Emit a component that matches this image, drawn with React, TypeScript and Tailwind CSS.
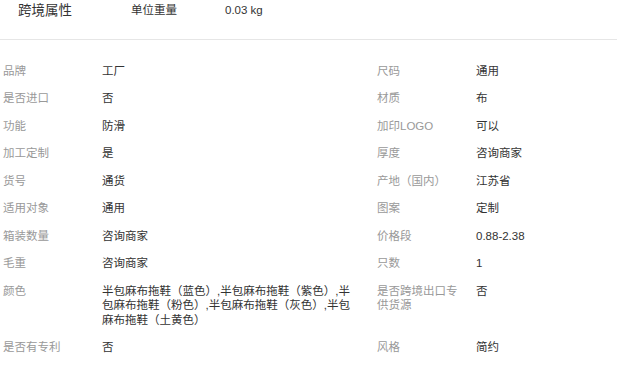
import React from "react";

const rows: [string, string, string, string][] = [
  ["品牌", "工厂", "尺码", "通用"],
  ["是否进口", "否", "材质", "布"],
  ["功能", "防滑", "加印LOGO", "可以"],
  ["加工定制", "是", "厚度", "咨询商家"],
  ["货号", "通货", "产地（国内）", "江苏省"],
  ["适用对象", "通用", "图案", "定制"],
  ["箱装数量", "咨询商家", "价格段", "0.88-2.38"],
  ["毛重", "咨询商家", "只数", "1"],
  [
    "颜色",
    "半包麻布拖鞋（蓝色）,半包麻布拖鞋（紫色）,半包麻布拖鞋（粉色）,半包麻布拖鞋（灰色）,半包麻布拖鞋（土黄色）",
    "是否跨境出口专供货源",
    "否",
  ],
  ["是否有专利", "否", "风格", "简约"],
];

export default function App() {
  return (
    <div
      className="w-[618px] h-[366px] bg-white overflow-hidden"
      style={{ fontFamily: '"Liberation Sans", "Noto Sans CJK SC", sans-serif' }}
    >
      <div className="h-[39px] flex items-start pt-[2px]">
        <div className="pl-[18px] w-[131px] text-[13.5px] leading-[17px] text-[#333]">跨境属性</div>
        <div className="w-[94px] text-[11.5px] leading-[17px] text-[#333]">单位重量</div>
        <div className="text-[11.5px] leading-[17px] text-[#333]">0.03 kg</div>
      </div>
      <div className="h-px bg-[#e6e6e6] w-[617px]" />
      <div className="pt-[17px] pl-[3px] text-[11.5px] leading-[14.5px]">
        {rows.map((r, i) => (
          <div key={i} className="flex py-[6.5px]">
            <div className="w-[99px] pr-[12px] text-[#999]">{r[0]}</div>
            <div className="w-[275px] pr-[22px] text-[#333]">{r[1]}</div>
            <div className="w-[99px] pr-[12px] text-[#999]">{r[2]}</div>
            <div className="flex-1 text-[#333]">{r[3]}</div>
          </div>
        ))}
      </div>
    </div>
  );
}
